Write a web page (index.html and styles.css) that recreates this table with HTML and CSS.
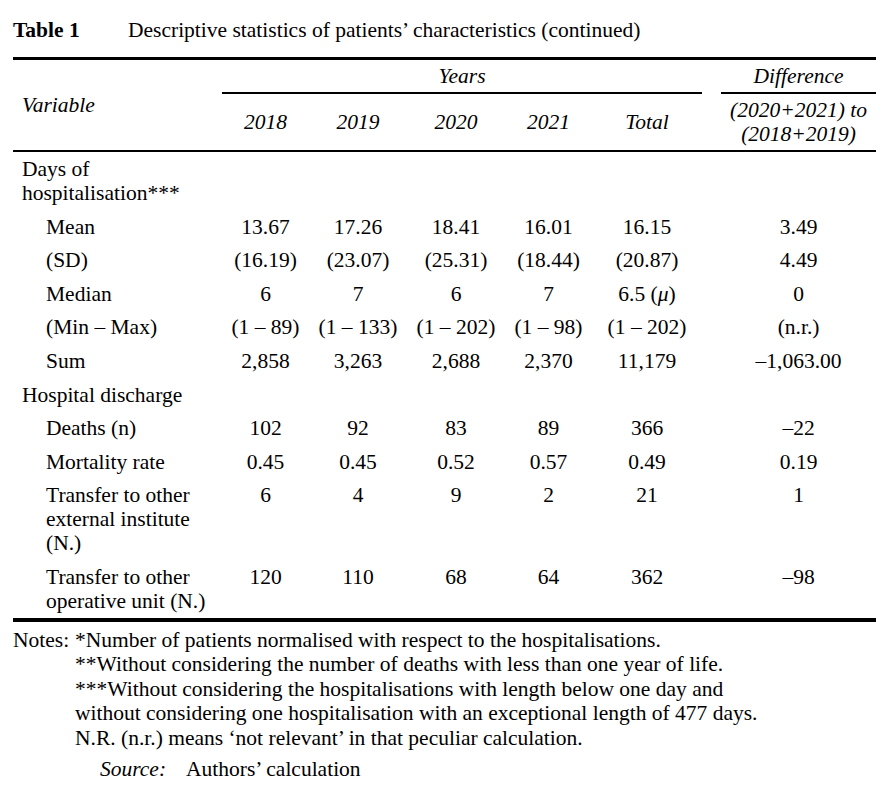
FILE: index.html
```html
<!DOCTYPE html>
<html lang="en">
<head>
    <meta charset="UTF-8">
    <title>Table 1 - Descriptive statistics</title>
    <link rel="stylesheet" href="styles.css">
</head>
<body>
    <div class="page">
        <p class="caption"><span class="caption-label">Table 1</span><span>Descriptive statistics of patients’ characteristics (continued)</span></p>

        <table class="stats">
            <colgroup>
                <col class="col-var">
                <col class="col-y1">
                <col class="col-y2">
                <col class="col-y3">
                <col class="col-y4">
                <col class="col-total">
                <col class="col-gap">
                <col class="col-diff">
            </colgroup>
            <thead>
                <tr class="head-top">
                    <th rowspan="2" class="var-head">Variable</th>
                    <th colspan="5" class="group-head">Years</th>
                    <th class="gap"></th>
                    <th class="group-head">Difference</th>
                </tr>
                <tr class="head-bottom">
                    <th>2018</th>
                    <th>2019</th>
                    <th>2020</th>
                    <th>2021</th>
                    <th>Total</th>
                    <th class="gap"></th>
                    <th>(2020+2021) to<br>(2018+2019)</th>
                </tr>
            </thead>
            <tbody>
                <tr>
                    <td class="label">Days of<br>hospitalisation***</td>
                    <td></td><td></td><td></td><td></td><td></td><td></td><td></td>
                </tr>
                <tr>
                    <td class="label sub">Mean</td>
                    <td>13.67</td><td>17.26</td><td>18.41</td><td>16.01</td><td>16.15</td><td></td><td>3.49</td>
                </tr>
                <tr>
                    <td class="label sub">(SD)</td>
                    <td>(16.19)</td><td>(23.07)</td><td>(25.31)</td><td>(18.44)</td><td>(20.87)</td><td></td><td>4.49</td>
                </tr>
                <tr>
                    <td class="label sub">Median</td>
                    <td>6</td><td>7</td><td>6</td><td>7</td><td>6.5 (<i>μ</i>)</td><td></td><td>0</td>
                </tr>
                <tr>
                    <td class="label sub">(Min – Max)</td>
                    <td>(1 – 89)</td><td>(1 – 133)</td><td>(1 – 202)</td><td>(1 – 98)</td><td>(1 – 202)</td><td></td><td>(n.r.)</td>
                </tr>
                <tr>
                    <td class="label sub">Sum</td>
                    <td>2,858</td><td>3,263</td><td>2,688</td><td>2,370</td><td>11,179</td><td></td><td>–1,063.00</td>
                </tr>
                <tr>
                    <td class="label">Hospital discharge</td>
                    <td></td><td></td><td></td><td></td><td></td><td></td><td></td>
                </tr>
                <tr>
                    <td class="label sub">Deaths (n)</td>
                    <td>102</td><td>92</td><td>83</td><td>89</td><td>366</td><td></td><td>–22</td>
                </tr>
                <tr>
                    <td class="label sub">Mortality rate</td>
                    <td>0.45</td><td>0.45</td><td>0.52</td><td>0.57</td><td>0.49</td><td></td><td>0.19</td>
                </tr>
                <tr>
                    <td class="label sub">Transfer to other<br>external institute<br>(N.)</td>
                    <td>6</td><td>4</td><td>9</td><td>2</td><td>21</td><td></td><td>1</td>
                </tr>
                <tr>
                    <td class="label sub">Transfer to other<br>operative unit (N.)</td>
                    <td>120</td><td>110</td><td>68</td><td>64</td><td>362</td><td></td><td>–98</td>
                </tr>
            </tbody>
        </table>

        <div class="notes">
            <span class="notes-label">Notes:</span>
            <div class="notes-lines">
                <p>*Number of patients normalised with respect to the hospitalisations.</p>
                <p>**Without considering the number of deaths with less than one year of life.</p>
                <p>***Without considering the hospitalisations with length below one day and<br>without considering one hospitalisation with an exceptional length of 477 days.</p>
                <p>N.R. (n.r.) means ‘not relevant’ in that peculiar calculation.</p>
            </div>
        </div>
        <p class="source"><i>Source:</i><span>Authors’ calculation</span></p>
    </div>
</body>
</html>
```

FILE: styles.css
```css
* {
    margin: 0;
    padding: 0;
    box-sizing: border-box;
}

body {
    background: #fff;
    color: #000;
    font-family: "Liberation Serif", "Times New Roman", serif;
    font-size: 21.5px;
    line-height: 24px;
}

.page {
    width: 863px;
    margin-left: 13px;
}

.caption {
    display: flex;
    padding-top: 18px;
    height: 57px;
}

.caption-label {
    font-weight: bold;
    width: 115px;
}

/* table */

.stats {
    width: 863px;
    border-collapse: collapse;
    table-layout: fixed;
    border-top: 3px solid #000;
    border-bottom: 4px solid #000;
}

.col-var { width: 209px; }
.col-y1 { width: 87px; }
.col-y2 { width: 98px; }
.col-y3 { width: 98px; }
.col-y4 { width: 87px; }
.col-total { width: 110px; }
.col-gap { width: 19px; }
.col-diff { width: 155px; }

.stats th {
    font-weight: normal;
    font-style: italic;
    text-align: center;
    vertical-align: middle;
    padding: 4px 0;
}

.stats .var-head {
    text-align: left;
    padding-left: 9px;
    border-bottom: 2px solid #000;
}

.group-head {
    border-bottom: 2px solid #000;
}

.head-bottom th {
    border-bottom: 2px solid #000;
}

.stats td {
    text-align: center;
    vertical-align: top;
    padding: 5px 0 4.6px;
    white-space: nowrap;
}

.stats td.label {
    text-align: left;
    padding-left: 9px;
}

.stats td.sub {
    padding-left: 33px;
}

/* notes */

.notes {
    display: flex;
    margin-top: 6px;
    line-height: 24.5px;
}

.notes-label {
    width: 62px;
}

.source {
    margin-top: 7px;
    padding-left: 87px;
    display: flex;
    gap: 20px;
}
```
